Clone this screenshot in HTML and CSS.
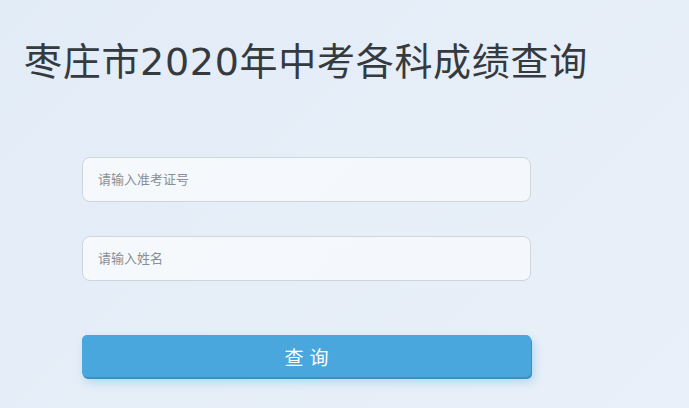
FILE: index.html
```html
<!DOCTYPE html>
<html lang="zh-CN">
<head>
    <meta charset="UTF-8">
    <meta name="viewport" content="width=device-width, initial-scale=1.0">
    <title>枣庄市2020年中考各科成绩查询</title>
    <link rel="stylesheet" href="styles.css">
</head>
<body>

    <h1 class="title">枣庄市2020年中考各科成绩查询</h1>

    <form class="query-form" action="#" method="post">
        <input class="field" type="text" name="zkzh" placeholder="请输入准考证号">
        <input class="field" type="text" name="xm" placeholder="请输入姓名">
        <button class="submit-btn" type="submit">查 询</button>
    </form>

</body>
</html>
```

FILE: styles.css
```css
body {
    font-family: 'DejaVu Sans', 'Noto Sans CJK SC', sans-serif;
    margin: 0;
    min-height: 408px;
    background: linear-gradient(135deg, #e2ecf7 0%, #e6eef8 50%, #e9f0f9 100%);
    color: #333;
}

.title {
    margin: 0;
    padding: 35px 0 0 24px;
    font-size: 38px;
    font-weight: normal;
    letter-spacing: 0.7px;
    line-height: 54px;
    color: #353a3f;
}

.query-form {
    display: flex;
    flex-direction: column;
    width: 449px;
    margin: 68px 0 0 82px;
}

.field {
    height: 45px;
    padding: 0 15px;
    border: 1px solid #cfd5dd;
    border-radius: 8px;
    background: linear-gradient(135deg, #f6f9fc, #f4f7fb);
    font-family: 'DejaVu Sans', 'Noto Sans CJK SC', sans-serif;
    font-size: 13px;
    color: #333;
    box-sizing: border-box;
    margin-bottom: 34px;
}

.field::placeholder {
    color: #8a8e93;
}

.field:focus {
    outline: none;
    border-color: #4aa7de;
}

.submit-btn {
    margin-top: 20px;
    height: 42px;
    border: none;
    border-radius: 5px;
    background-color: #4aa7de;
    box-shadow: 1px 2px 0 #3d8fc2, 3px 5px 10px rgba(74, 167, 222, 0.35);
    color: #fff;
    font-family: 'DejaVu Sans', 'Noto Sans CJK SC', sans-serif;
    font-size: 19px;
    cursor: pointer;
}

.submit-btn:hover {
    background-color: #3d99d1;
}
```
